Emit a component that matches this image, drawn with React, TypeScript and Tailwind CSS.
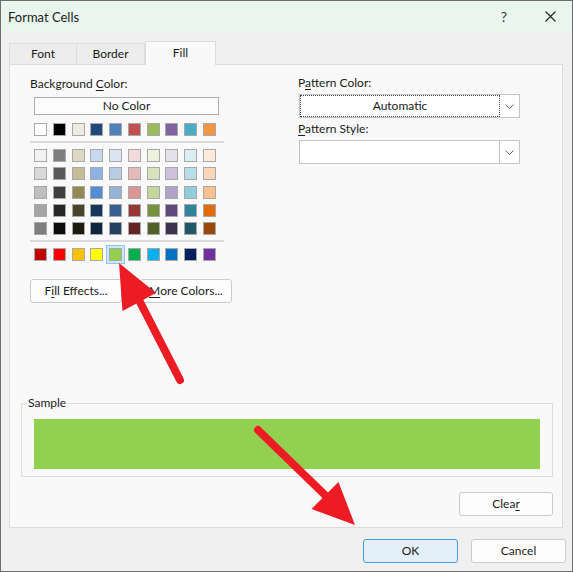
import React from "react";

const themeTop = ["#FFFFFF", "#000000", "#EEECE1", "#1F497D", "#4F81BD", "#C0504D", "#9BBB59", "#8064A2", "#4BACC6", "#F79646"];

const themeShades = [
  ["#F2F2F2", "#7F7F7F", "#DDD9C3", "#C6D9F0", "#DBE5F1", "#F2DCDB", "#EBF1DD", "#E5E0EC", "#DBEEF3", "#FDEADA"],
  ["#D8D8D8", "#595959", "#C4BD97", "#8DB3E2", "#B8CCE4", "#E5B9B7", "#D7E3BC", "#CCC1D9", "#B7DDE8", "#FBD5B5"],
  ["#BFBFBF", "#3F3F3F", "#938953", "#548DD4", "#95B3D7", "#D99694", "#C3D69B", "#B2A2C7", "#92CDDC", "#FAC08F"],
  ["#A5A5A5", "#262626", "#494429", "#17365D", "#366092", "#953734", "#76923C", "#5F497A", "#31859B", "#E36C09"],
  ["#7F7F7F", "#0C0C0C", "#1D1B10", "#0F243E", "#244061", "#632423", "#4F6128", "#3F3151", "#205867", "#974806"],
];

const standard = ["#C00000", "#FF0000", "#FFC000", "#FFFF00", "#92D050", "#00B050", "#00B0F0", "#0070C0", "#002060", "#7030A0"];

function Swatch({ color, selected }: { color: string; selected?: boolean }) {
  return (
    <div
      className={
        "h-[13px] w-[13px] border border-[#a8a8a8] " +
        (selected ? "shadow-[0_0_0_2px_#cfe6f8,0_0_0_3px_#8ec5ef]" : "")
      }
      style={{ backgroundColor: color }}
    />
  );
}

function SwatchRow({ colors, selected }: { colors: string[]; selected?: number }) {
  return (
    <div className="flex gap-x-[5.75px]">
      {colors.map((c, i) => (
        <Swatch key={i} color={c} selected={selected === i} />
      ))}
    </div>
  );
}

function Chevron() {
  return (
    <svg width="9" height="5" viewBox="0 0 9 5" fill="none">
      <polyline points="0.5,0.5 4.5,4.5 8.5,0.5" stroke="#6b6b6b" strokeWidth="1" />
    </svg>
  );
}

function Button({ children, className = "" }: { children: React.ReactNode; className?: string }) {
  return (
    <div
      className={
        "flex h-[24px] w-[92px] items-center justify-center rounded-[3px] border border-[#cbcbcb] bg-[#fdfdfd] " +
        className
      }
    >
      {children}
    </div>
  );
}

function U({ children }: { children: React.ReactNode }) {
  return <span className="underline decoration-1 underline-offset-2">{children}</span>;
}

export default function App() {
  return (
    <div className="relative flex h-[572px] w-[573px] flex-col overflow-hidden border border-[#6e6e6e] bg-[#f0f0f0] font-['Segoe_UI','Lato',sans-serif] text-[12px] leading-[16px] text-[#1b1b1b]">
      {/* Title bar */}
      <div className="flex h-[31px] shrink-0 items-center bg-[#e9f6ef] pl-[7px] pr-[16px]">
        <span className="text-[13px]">Format Cells</span>
        <span className="ml-auto mr-[38px] text-[14px] text-[#333]">?</span>
        <svg width="11" height="11" viewBox="0 0 11 11">
          <path d="M0.5 0.5 L10.5 10.5 M10.5 0.5 L0.5 10.5" stroke="#222" strokeWidth="1.1" />
        </svg>
      </div>

      {/* Tabs */}
      <div className="mt-[9px] flex h-[23px] items-end pl-[8px]">
        <div className="flex h-[21px] w-[68px] items-center justify-center border border-b-0 border-[#dcdcdc] bg-[#ededed]">
          Font
        </div>
        <div className="flex h-[21px] w-[68px] items-center justify-center border border-b-0 border-l-0 border-[#dcdcdc] bg-[#ededed]">
          Border
        </div>
        <div className="relative z-10 -mb-px flex h-[24px] w-[71px] items-center justify-center border border-b-0 border-[#dcdcdc] bg-[#f9f9f9] pb-[2px]">
          Fill
        </div>
      </div>

      {/* Panel */}
      <div className="ml-[8px] mr-[9px] flex h-[464px] flex-col border border-[#dcdcdc] bg-[#f9f9f9]">
        <div className="flex">
          {/* Left column */}
          <div className="flex w-[288px] flex-col pl-[20px] pt-[11px]">
            <div>
              Background <U>C</U>olor:
            </div>
            <div className="ml-[4px] mt-[5px] flex h-[18px] w-[185px] items-center justify-center border border-[#adadad] bg-[#fdfdfd]">
              No Color
            </div>
            <div className="ml-[4px] mt-[8px]">
              <SwatchRow colors={themeTop} />
            </div>
            <div className="mt-[5px] h-[2px] w-[194px] bg-[#dadada]" />
            <div className="ml-[4px] mt-[6px] flex flex-col gap-y-[5.25px]">
              {themeShades.map((row, i) => (
                <SwatchRow key={i} colors={row} />
              ))}
            </div>
            <div className="mt-[5px] h-[2px] w-[194px] bg-[#dadada]" />
            <div className="ml-[4px] mt-[6px]">
              <SwatchRow colors={standard} selected={4} />
            </div>
            <div className="mt-[18px] flex gap-[18px]">
              <Button>
                F<U>i</U>ll Effects...
              </Button>
              <Button>
                <U>M</U>ore Colors...
              </Button>
            </div>
          </div>

          {/* Right column */}
          <div className="flex flex-col pt-[10px]">
            <div>
              P<U>a</U>ttern Color:
            </div>
            <div className="ml-[1px] mt-[3px] flex h-[24px] w-[221px] border border-[#c4c4c4] bg-white">
              <div className="flex flex-1 items-center justify-center border border-dotted border-[#444]">
                Automatic
              </div>
              <div className="flex w-[19px] items-center justify-center">
                <Chevron />
              </div>
            </div>
            <div className="mt-[3px]">
              <U>P</U>attern Style:
            </div>
            <div className="ml-[1px] mt-[3px] flex h-[24px] w-[221px] border border-[#c4c4c4] bg-white">
              <div className="flex-1" />
              <div className="flex w-[20px] items-center justify-center border-l border-[#c4c4c4]">
                <Chevron />
              </div>
            </div>
          </div>
        </div>

        {/* Sample */}
        <fieldset className="ml-[11px] mr-[9px] mt-[92px] border border-[#dddddd] px-0 pb-[7px]">
          <legend className="ml-[5px] px-[1px] leading-[16px]">Sample</legend>
          <div className="mx-[12px] mt-[8px] h-[50px] bg-[#92d050]" />
        </fieldset>

        <div className="mr-[9px] mt-[15px] flex justify-end">
          <Button className="w-[94px]">
            Clea<U>r</U>
          </Button>
        </div>
      </div>

      {/* Footer */}
      <div className="mt-[11px] flex justify-end gap-[13px] pr-[6px]">
        <div className="flex h-[24px] w-[95px] items-center justify-center rounded-[3px] border border-[#4a9ce0] bg-[#e3eff9]">
          OK
        </div>
        <div className="flex h-[24px] w-[95px] items-center justify-center rounded-[3px] border border-[#cbcbcb] bg-[#fdfdfd]">
          Cancel
        </div>
      </div>

      {/* Annotation arrows */}
      <svg className="pointer-events-none absolute left-[-1px] top-[-1px]" width="573" height="572" viewBox="0 0 573 572">
        <line x1="180" y1="380" x2="140" y2="302" stroke="#ed1c24" strokeWidth="8" strokeLinecap="round" />
        <polygon points="119,263 156,293 122.5,311" fill="#ed1c24" />
        <line x1="258" y1="430" x2="326" y2="496" stroke="#ed1c24" strokeWidth="8" strokeLinecap="round" />
        <polygon points="355,525 311.5,509 338.5,482" fill="#ed1c24" />
      </svg>
    </div>
  );
}
